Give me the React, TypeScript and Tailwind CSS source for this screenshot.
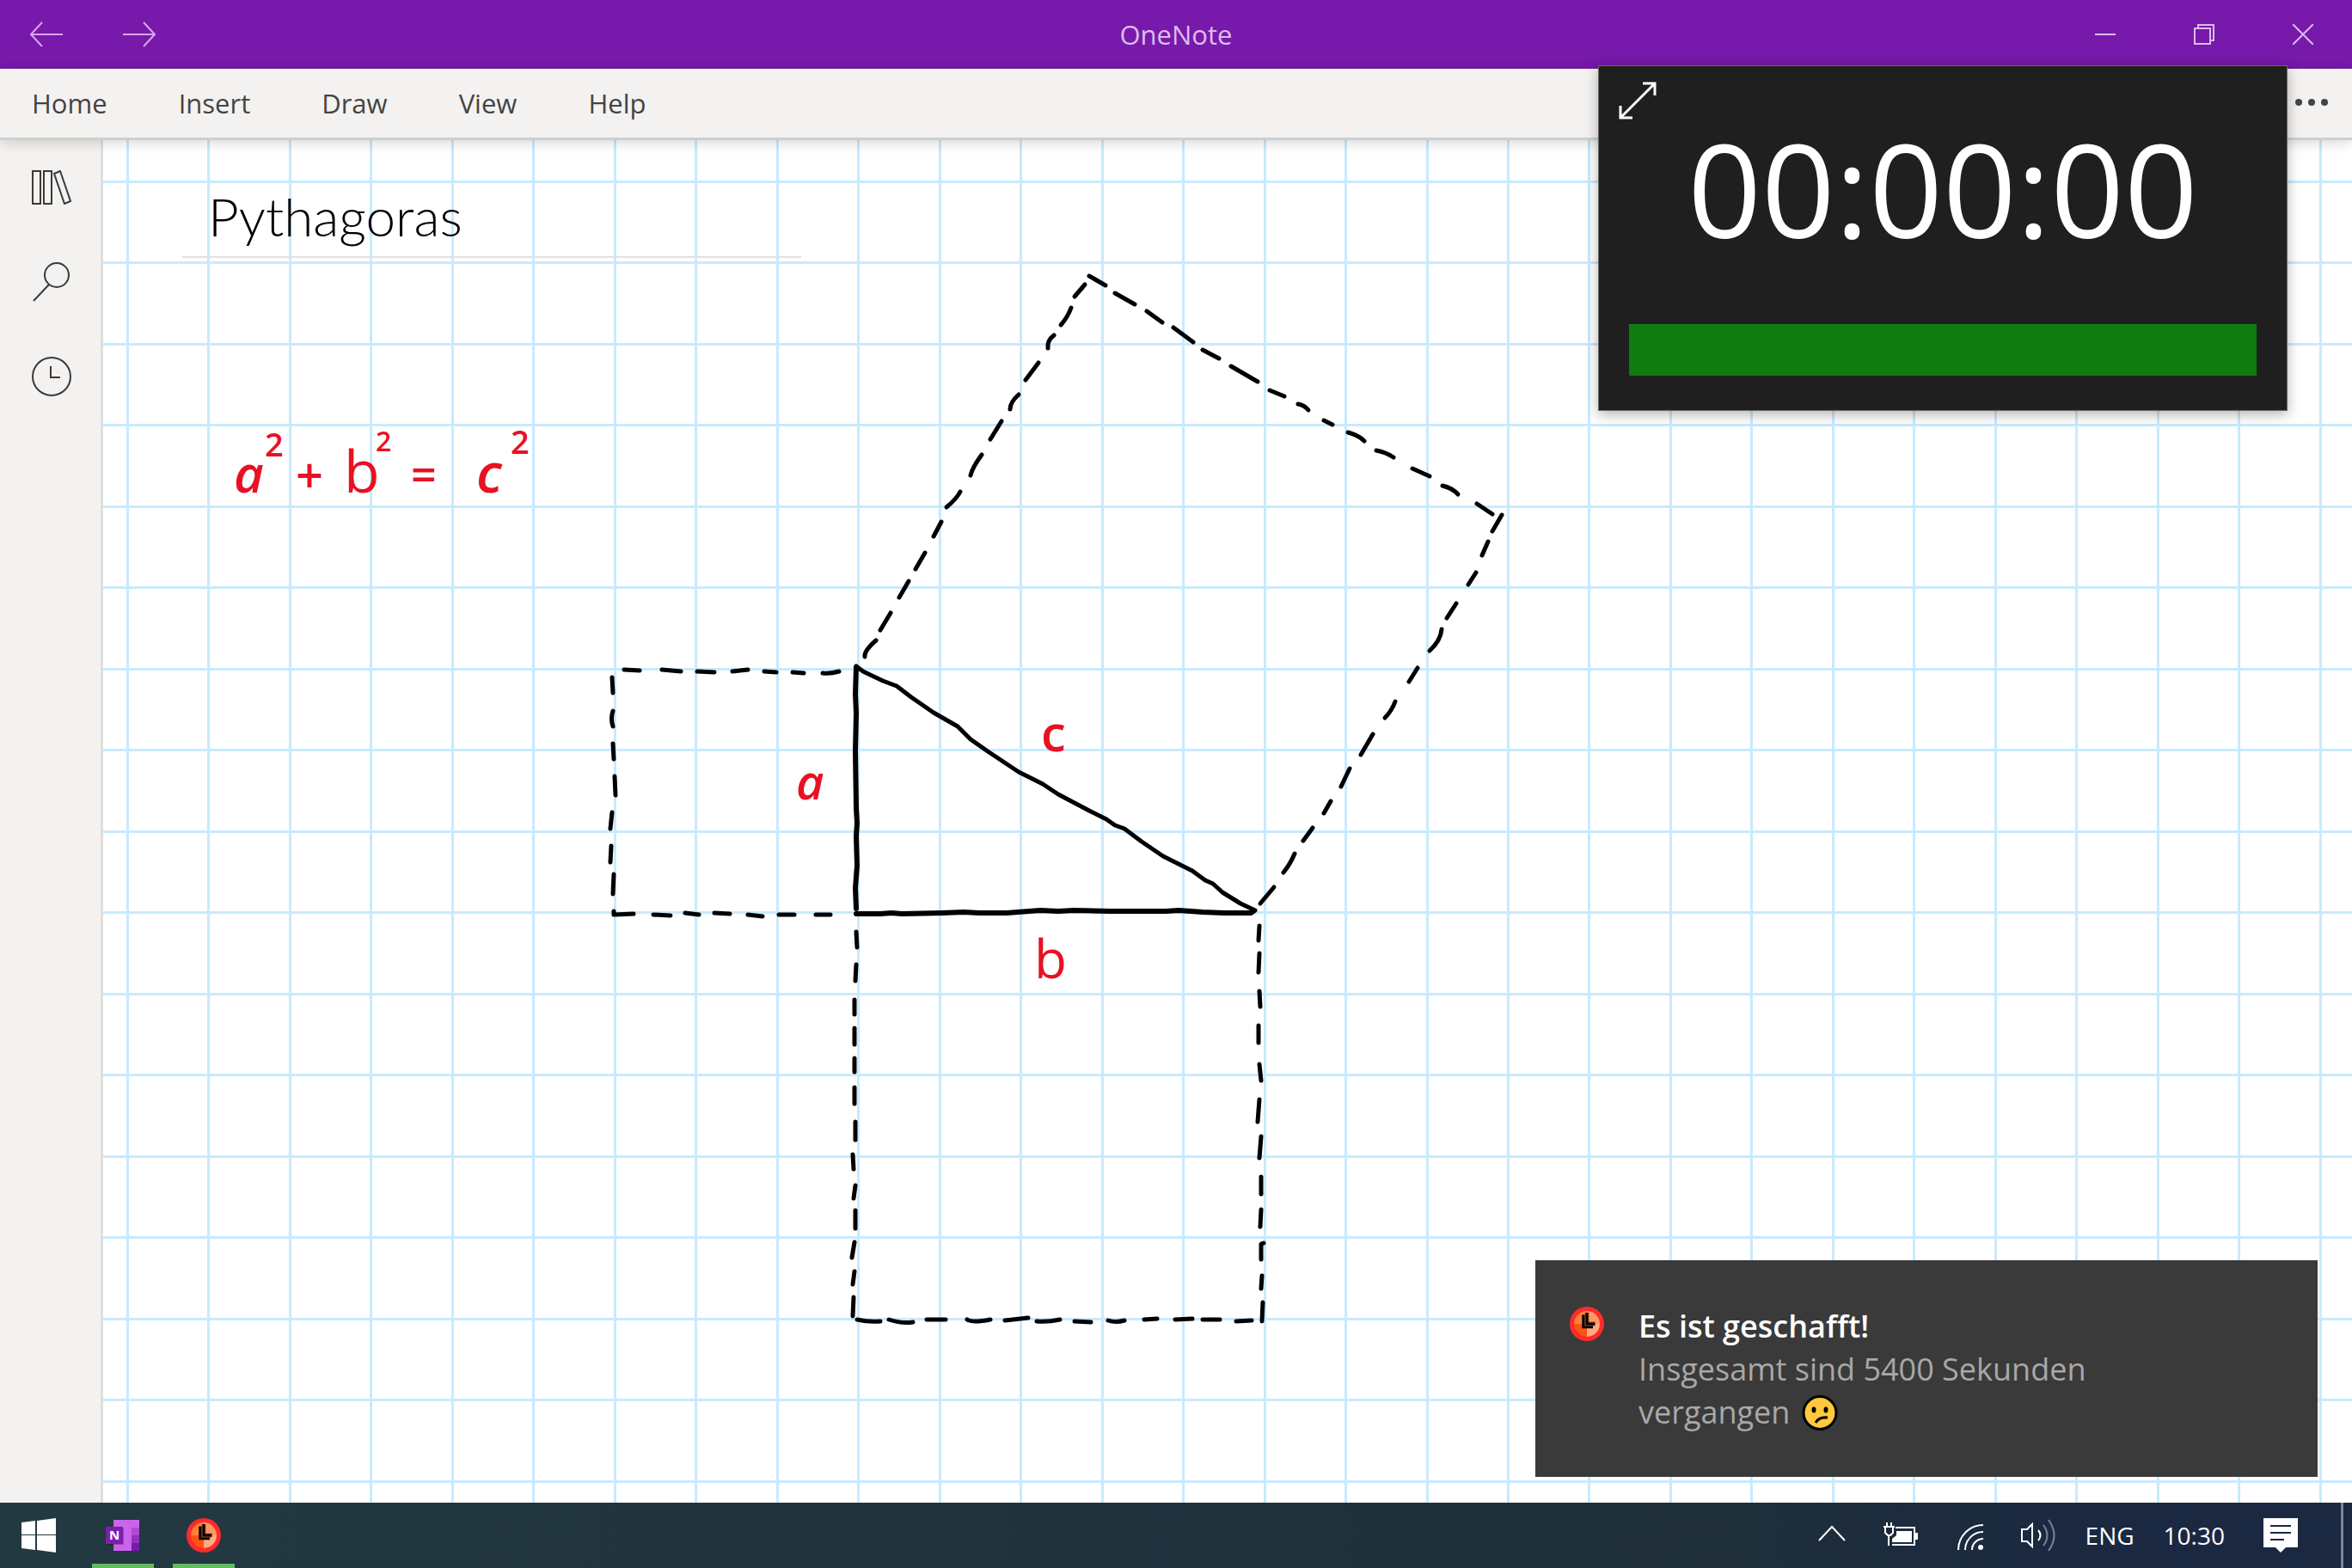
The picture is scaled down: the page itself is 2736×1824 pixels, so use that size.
import React from "react";

const GRID_STEP = 94.47;
const verticalLines = Array.from({ length: 60 }, (_, i) => Math.round(147 + i * GRID_STEP));
const horizontalLines = Array.from({ length: 40 }, (_, i) => Math.round(210 + i * GRID_STEP));

// Ink dashes of the square over side c
const squareC = [
  "M1262 331L1250 345", "M1246 358Q1242 369 1234 378", "M1226 390Q1218 396 1219 405", "M1208 422L1193 442",
  "M1185 459Q1175 468 1175 476", "M1165 490L1152 511", "M1142 529Q1131 544 1129 553", "M1117 572Q1113 580 1101 590",
  "M1095 607L1086 624", "M1076 643L1065 662", "M1057 676L1046 695", "M1036 713L1024 733", "M1019 745Q1005 757 1006 764",
  "M1267 321L1286 332", "M1297 341L1320 354", "M1334 362L1352 375", "M1365 381L1388 398", "M1399 407L1418 417",
  "M1432 426L1463 444", "M1477 454L1494 461", "M1510 470Q1517 471 1522 477", "M1540 489L1550 494",
  "M1568 503Q1580 506 1587 513", "M1601 524Q1612 526 1621 532", "M1643 545L1663 554", "M1678 565Q1690 568 1696 575",
  "M1718 586L1736 598", "M1747 599L1736 618", "M1731 630L1724 646", "M1717 666L1708 680", "M1694 702L1683 719",
  "M1677 732Q1676 745 1663 757", "M1649 777L1639 793", "M1623 816Q1619 827 1611 835", "M1597 854L1583 878",
  "M1570 894L1560 915", "M1548 932L1540 946", "M1527 963L1516 978", "M1506 993Q1501 1005 1493 1015", "M1482 1032L1466 1051",
];

// Ink dashes of the square over side a
const squareA = [
  "M726 779L744 780", "M770 779L792 781", "M811 781L831 782", "M852 781L870 779", "M889 781L903 782", "M922 782L935 783",
  "M957 783Q966 784 976 781", "M712 788L713 806", "M713 827Q710 836 713 845", "M713 865L714 883", "M715 903L716 925",
  "M712 945L710 964", "M711 984L710 1003", "M714 1017L713 1040", "M714 1060L714 1064L737 1063", "M760 1064L780 1065",
  "M797 1062L813 1064", "M831 1062L849 1063", "M870 1064L887 1066", "M906 1064L924 1064", "M949 1064L966 1064",
];

// Ink dashes of the square over side b
const squareB = [
  "M996 1084L997 1102", "M996 1122L995 1141", "M994 1163L994 1180", "M994 1196L994 1215", "M994 1231L994 1247",
  "M994 1265L994 1284", "M995 1305L995 1326", "M992 1343L993 1360", "M995 1379L993 1394", "M995 1408L995 1429",
  "M994 1445L991 1463", "M994 1479L992 1494", "M993 1509L992 1531", "M1465 1077L1464 1094", "M1465 1109L1464 1131",
  "M1465 1153L1466 1171", "M1464 1193L1464 1213", "M1465 1238L1467 1257", "M1465 1279L1463 1305", "M1467 1322L1465 1347",
  "M1467 1369L1467 1389", "M1467 1407L1466 1427", "M1470 1446L1467 1447L1467 1465", "M1468 1484L1467 1499",
  "M1469 1515L1468 1537", "M997 1535Q1010 1538 1024 1537", "M1034 1535Q1049 1540 1062 1538", "M1078 1535L1100 1535",
  "M1125 1535Q1131 1539 1152 1535", "M1169 1536L1196 1533", "M1206 1537Q1219 1538 1233 1535", "M1250 1537L1269 1538",
  "M1289 1536Q1298 1539 1308 1536", "M1331 1535L1346 1534", "M1367 1535L1387 1534", "M1399 1535L1419 1535", "M1438 1537L1456 1536",
];

function Drawing() {
  return (
    <svg className="absolute inset-0 h-full w-full" role="img" aria-label="Right triangle with squares over its sides">
      <g transform="translate(-120 -163)">
        <g fill="#c8eaff">
          {verticalLines.map((x) => (
            <rect key={x} x={x} y={0} width={3} height={4000} />
          ))}
          {horizontalLines.map((y) => (
            <rect key={y} x={0} y={y} width={6000} height={3} />
          ))}
        </g>
        <g fill="none" stroke="#000" strokeWidth={5} strokeLinecap="round" strokeLinejoin="round">
          {[...squareC, ...squareA, ...squareB].map((d) => (
            <path key={d} d={d} />
          ))}
          <path
            strokeWidth={6}
            d="M996 776L995 807L996 830L995 873L996 940L997 957L996 973L997 1007L995 1033L996 1057"
          />
          <path
            d="M996 775L1004 781L1027 792L1043 798L1060 811L1086 829L1114 845L1129 860L1149 874L1185 898L1213 912L1231 924L1267 943L1287 953L1297 960L1308 964L1328 979L1353 996L1387 1013L1402 1024L1411 1028L1422 1038L1443 1051L1460 1059"
          />
          <path
            strokeWidth={6}
            d="M996 1063L1024 1063L1037 1062L1049 1063L1096 1062L1121 1061L1139 1062L1171 1062L1210 1059L1231 1060L1249 1059L1292 1060L1356 1060L1371 1059L1399 1061L1424 1062L1455 1062L1458 1060"
          />
        </g>
        <g className="fill-[#e81123] font-['Open_Sans',sans-serif] font-semibold" fontSize={60}>
          <text x={272} y={573} fontStyle="italic">a</text>
          <text x={308} y={531} fontSize={38}>2</text>
          <text x={344} y={573} fontSize={56}>+</text>
          <text x={400} y={573} className="font-medium" fontSize={68}>b</text>
          <text x={437} y={525} fontSize={32}>2</text>
          <text x={478} y={571} fontSize={52}>=</text>
          <text x={554} y={573} fontStyle="italic" fontSize={64}>c</text>
          <text x={594} y={528} fontSize={38}>2</text>
          <text x={926} y={930} fontStyle="italic" fontSize={56}>a</text>
          <text x={1211} y={874} fontSize={58}>c</text>
          <text x={1203} y={1138} className="font-medium" fontSize={62}>b</text>
        </g>
      </g>
    </svg>
  );
}

function AlarmLogo() {
  return (
    <svg className="h-10 w-10 shrink-0" viewBox="0 0 40 40" aria-hidden="true">
      <circle cx="20" cy="20" r="20" fill="#ff2a2a" />
      <path d="M20 20V5A15 15 0 0 0 5 20Z" fill="#ff8038" />
      <path d="M20 20V5A15 15 0 0 1 35 20Z" fill="#ff9860" />
      <path d="M20 20V35A15 15 0 0 1 5 20Z" fill="#ff5316" />
      <path d="M20 20V35A15 15 0 0 0 35 20Z" fill="#ffaa80" />
      <g fill="none">
        <path d="M16 9.5V23.6H27" stroke="#000" strokeWidth="3.4" />
        <path d="M20 7V20H29.4" stroke="#a8512c" strokeWidth="4.8" />
        <path d="M20 7V20H29.4" stroke="#000" strokeWidth="3" />
      </g>
    </svg>
  );
}

function TitleBar() {
  return (
    <header className="grid h-20 grid-cols-[1fr_auto_1fr] items-center bg-[#7719aa] text-[#dcbbee]">
      <div className="flex pl-4">
        <button aria-label="Back" className="flex w-[76px] justify-center">
          <svg width="38" height="30" fill="none" stroke="#d8a5ec" strokeWidth="2">
            <path d="M1 15H38M14 1L1 15L14 29" />
          </svg>
        </button>
        <button aria-label="Forward" className="ml-8 flex w-[76px] justify-center">
          <svg width="38" height="30" fill="none" stroke="#d8a5ec" strokeWidth="2">
            <path d="M0 15H37M24 1L37 15L24 29" />
          </svg>
        </button>
      </div>
      <h1 className="text-[31px] leading-10">OneNote</h1>
      <div className="flex justify-end">
        <button aria-label="Minimize" className="flex h-20 w-[115px] items-center justify-center">
          <svg width="24" height="24" fill="none" stroke="currentColor" strokeWidth="2">
            <path d="M0 12H24" />
          </svg>
        </button>
        <button aria-label="Restore" className="flex h-20 w-[115px] items-center justify-center">
          <svg width="24" height="24" fill="none" stroke="currentColor" strokeWidth="2">
            <path d="M1 5H19V23H1ZM5 5V1H23V19H19" />
          </svg>
        </button>
        <button aria-label="Close" className="flex h-20 w-[115px] items-center justify-center">
          <svg width="24" height="24" fill="none" stroke="currentColor" strokeWidth="2">
            <path d="M0 0L24 24M24 0L0 24" />
          </svg>
        </button>
      </div>
    </header>
  );
}

function MenuBar() {
  return (
    <nav className="relative z-10 flex h-[83px] items-center justify-between border-b-[3px] border-[#d0cfce] bg-[#f3f2f1] px-[37px] text-[31px] text-[#444] shadow-[0_3px_14px_rgba(0,0,0,0.16)]">
      <div className="flex gap-[83px]">
        <button>Home</button>
        <button>Insert</button>
        <button>Draw</button>
        <button>View</button>
        <button>Help</button>
      </div>
      <button aria-label="More" className="-mr-2.5">
        <svg width="40" height="10" fill="#444">
          <circle cx="5" cy="4" r="4" />
          <circle cx="20" cy="4" r="4" />
          <circle cx="35" cy="4" r="4" />
        </svg>
      </button>
    </nav>
  );
}

function SideBar() {
  return (
    <aside className="flex w-[120px] shrink-0 flex-col border-r-[3px] border-[#dedede] bg-[#f3f2f1]">
      <button aria-label="Notebooks" className="flex h-[110px] items-center justify-center">
        <svg width="48" height="40" fill="none" stroke="#3b3a39" strokeWidth="2">
          <path d="M3 1H12V39H3ZM16 1H25V39H16ZM28 4L35 1L47 36L40 39Z" />
        </svg>
      </button>
      <button aria-label="Search" className="flex h-[110px] items-center justify-center">
        <svg width="48" height="48" fill="none" stroke="#3b3a39" strokeWidth="2">
          <circle cx="31" cy="16" r="14" />
          <path d="M22 27L4 46" />
        </svg>
      </button>
      <button aria-label="Recent" className="flex h-[110px] items-center justify-center">
        <svg width="48" height="48" fill="none" stroke="#3b3a39" strokeWidth="2">
          <circle cx="25" cy="24" r="22" />
          <path d="M24 12V25H35" />
        </svg>
      </button>
    </aside>
  );
}

function TimerWindow() {
  return (
    <section
      aria-label="Timer"
      className="absolute top-[76px] right-[75px] z-20 flex w-[802px] flex-col border border-[#8a8a8a]/70 bg-[#1f1f1f] px-[35px] pt-[18px] pb-10 shadow-[0_4px_14px_rgba(0,0,0,0.3)]"
    >
      <button aria-label="Expand" className="-ml-3 self-start">
        <svg width="44" height="44" fill="none" stroke="#fff" strokeWidth="3">
          <path d="M2 42L42 2M28 2H42V16M2 28V42H16" />
        </svg>
      </button>
      <time className="text-center text-[150px] leading-[160px] text-white">00:00:00</time>
      <div role="progressbar" aria-label="Elapsed" aria-valuenow={100} className="mt-[78px] h-[60px] bg-[#107c10]" />
    </section>
  );
}

function Toast() {
  return (
    <section
      role="alert"
      className="absolute right-10 bottom-[30px] flex w-[910px] gap-10 bg-[#3a3a3a] pt-[52px] pr-40 pb-[50px] pl-10"
    >
      <span className="pt-0.5">
        <AlarmLogo />
      </span>
      <div className="text-[36px] leading-[50px]">
        <h2 className="font-semibold text-white">Es ist geschafft!</h2>
        <p className="text-[#a8a8a8]">
          Insgesamt sind 5400 Sekunden
          <br />
          <span className="flex items-center gap-3.5">
            vergangen
            <svg width="42" height="43" viewBox="0 0 42 43" fill="none" stroke="#000" role="img" aria-label="Confused face">
              <circle cx="21" cy="21.5" r="19" fill="#ffc83d" strokeWidth="3" />
              <ellipse cx="14" cy="18" rx="2.5" ry="3.5" fill="#000" stroke="none" />
              <ellipse cx="28" cy="18" rx="2.5" ry="3.5" fill="#000" stroke="none" />
              <path d="M16 33Q20 26 30 27" strokeWidth="3" />
            </svg>
          </span>
        </p>
      </div>
    </section>
  );
}

function TaskBar() {
  return (
    <footer className="flex h-[76px] items-stretch justify-between bg-linear-to-r from-[#233942] from-0% via-[#1e2e3a] via-75% to-[#1b2841] to-90% text-[28px] text-white">
      <div className="flex">
        <button aria-label="Start" className="flex w-24 items-center pl-[25px]">
          <svg width="40" height="40" fill="#fff">
            <path d="M0 5L16 3V19H0ZM18 3L40 0V19H18ZM0 20H16V37L0 35ZM18 20H40V40L18 37Z" />
          </svg>
        </button>
        <button aria-label="OneNote" className="flex w-[94px] flex-col items-center">
          <span className="flex flex-1 items-center pt-1">
            <svg width="40" height="38">
              <rect x="9" y="1" width="30" height="36" fill="#ca64ea" />
              <rect x="30" y="10" width="9" height="9" fill="#ae4bd5" />
              <rect x="30" y="19" width="9" height="9" fill="#9332bf" />
              <rect x="30" y="28" width="9" height="9" fill="#7719aa" />
              <rect x="2" y="11" width="19" height="19" fill="#000" opacity="0.25" />
              <rect x="0" y="9" width="20" height="20" fill="#7b1fb0" />
              <text x="10" y="24" textAnchor="middle" fontSize="15" fill="#fff" className="font-bold">N</text>
            </svg>
          </span>
          <span className="h-[5px] w-[72px] bg-[#63bb60]" />
        </button>
        <button aria-label="Timer" className="flex w-[94px] flex-col items-center">
          <span className="flex flex-1 items-center pt-1">
            <AlarmLogo />
          </span>
          <span className="h-[5px] w-[72px] bg-[#63bb60]" />
        </button>
      </div>
      <div className="flex items-center">
        <div className="mr-[35px] flex items-center gap-11">
          <button aria-label="Show hidden icons">
            <svg width="32" height="40" fill="none" stroke="#fff" strokeWidth="2">
              <path d="M1 26L16 10L31 26" />
            </svg>
          </button>
          <button aria-label="Battery">
            <svg width="42" height="40" fill="none" stroke="#fff" strokeWidth="2">
              <path d="M14 11H36V31H10" />
              <path d="M15 15H33V28H10V24L15 20Z" fill="#fff" stroke="none" />
              <path d="M37 17H40V25H37Z" fill="#fff" stroke="none" />
              <path d="M4 5V10M9 5V10M0 10H13M2 10V17L5 20H8L11 17V10M6 20V32" />
            </svg>
          </button>
          <button aria-label="Network">
            <svg width="30" height="40" fill="none" stroke="#fff" strokeWidth="2">
              <path d="M1 37A29 29 0 0 1 30 8M9 37A21 21 0 0 1 30 16M17 37A13 13 0 0 1 30 24" />
              <circle cx="27" cy="34" r="3" fill="#fff" stroke="none" />
            </svg>
          </button>
          <button aria-label="Volume">
            <svg width="40" height="40" fill="none" stroke="#fff" strokeWidth="2">
              <path d="M1 13H7L13 7V33L7 27H1Z" />
              <path d="M20 14Q25 20 20 26" />
              <path d="M26 8Q35 20 26 32M32 2Q45 20 32 38" stroke="#7a8493" />
            </svg>
          </button>
        </div>
        <div className="mr-[45px] flex items-center gap-[34px]">
          <button>ENG</button>
          <button>10:30</button>
        </div>
        <button aria-label="Notifications" className="mr-[50px]">
          <svg width="40" height="40" fill="#fff">
            <path d="M0 0H40V34H26L20 40L14 34H0Z" />
            <path d="M8 9H32M8 17H32M8 25H24" stroke="#1b2841" strokeWidth="2" />
          </svg>
        </button>
        <button aria-label="Show desktop" className="h-full w-[13px] border-l-[3px] border-[#7b8494]" />
      </div>
    </footer>
  );
}

export default function App() {
  return (
    <div className="relative flex min-h-screen flex-col overflow-hidden bg-white font-['Open_Sans',sans-serif]">
      <TitleBar />
      <MenuBar />
      <div className="flex flex-1">
        <SideBar />
        <main className="relative min-h-[1400px] flex-1 overflow-hidden">
          <Drawing />
          <div className="relative ml-[92px] w-[720px] border-b-2 border-[#e1e1e1] pt-[52px] pb-[10px] pl-[30px]">
            <h2 className="font-['Lato',sans-serif] text-[62px] leading-[73px] font-light text-black">Pythagoras</h2>
          </div>
          <Toast />
        </main>
      </div>
      <TaskBar />
      <TimerWindow />
    </div>
  );
}
